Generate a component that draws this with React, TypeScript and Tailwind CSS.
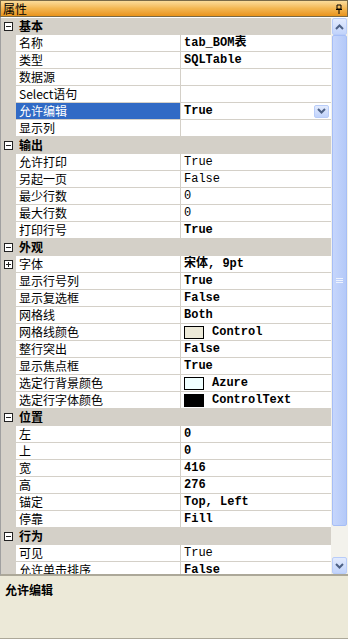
import React from "react";

type Row =
  | { kind: "cat"; label: string }
  | {
      kind: "prop";
      label: string;
      value?: string;
      bold?: boolean;
      swatch?: string;
      selected?: boolean;
      expand?: boolean;
    };

const rows: Row[] = [
  { kind: "cat", label: "基本" },
  { kind: "prop", label: "名称", value: "tab_BOM表", bold: true },
  { kind: "prop", label: "类型", value: "SQLTable", bold: true },
  { kind: "prop", label: "数据源" },
  { kind: "prop", label: "Select语句" },
  { kind: "prop", label: "允许编辑", value: "True", bold: true, selected: true },
  { kind: "prop", label: "显示列" },
  { kind: "cat", label: "输出" },
  { kind: "prop", label: "允许打印", value: "True" },
  { kind: "prop", label: "另起一页", value: "False" },
  { kind: "prop", label: "最少行数", value: "0" },
  { kind: "prop", label: "最大行数", value: "0" },
  { kind: "prop", label: "打印行号", value: "True", bold: true },
  { kind: "cat", label: "外观" },
  { kind: "prop", label: "字体", value: "宋体, 9pt", bold: true, expand: true },
  { kind: "prop", label: "显示行号列", value: "True", bold: true },
  { kind: "prop", label: "显示复选框", value: "False", bold: true },
  { kind: "prop", label: "网格线", value: "Both", bold: true },
  { kind: "prop", label: "网格线颜色", value: "Control", bold: true, swatch: "#ECE9D8" },
  { kind: "prop", label: "整行突出", value: "False", bold: true },
  { kind: "prop", label: "显示焦点框", value: "True", bold: true },
  { kind: "prop", label: "选定行背景颜色", value: "Azure", bold: true, swatch: "#F0FFFF" },
  { kind: "prop", label: "选定行字体颜色", value: "ControlText", bold: true, swatch: "#000000" },
  { kind: "cat", label: "位置" },
  { kind: "prop", label: "左", value: "0", bold: true },
  { kind: "prop", label: "上", value: "0", bold: true },
  { kind: "prop", label: "宽", value: "416", bold: true },
  { kind: "prop", label: "高", value: "276", bold: true },
  { kind: "prop", label: "锚定", value: "Top, Left", bold: true },
  { kind: "prop", label: "停靠", value: "Fill", bold: true },
  { kind: "cat", label: "行为" },
  { kind: "prop", label: "可见", value: "True" },
  { kind: "prop", label: "允许单击排序", value: "False", bold: true },
];

const cjk = "font-['Noto_Sans_CJK_SC',sans-serif]";
const mono = "font-['Liberation_Mono','Noto_Sans_CJK_SC',monospace]";

function Box({ plus }: { plus?: boolean }) {
  return (
    <svg width="9" height="9" viewBox="0 0 9 9" className="block">
      <rect x="0.5" y="0.5" width="8" height="8" fill="#fff" stroke="#222" />
      <line x1="2" y1="4.5" x2="7" y2="4.5" stroke="#222" />
      {plus && <line x1="4.5" y1="2" x2="4.5" y2="7" stroke="#222" />}
    </svg>
  );
}

function Chevron({ up }: { up?: boolean }) {
  return (
    <svg width="9" height="6" viewBox="0 0 9 6">
      <path
        d={up ? "M1 5 L4.5 1.5 L8 5" : "M1 1 L4.5 4.5 L8 1"}
        fill="none"
        stroke="#4D6185"
        strokeWidth="2"
      />
    </svg>
  );
}

function GridRow({ row }: { row: Row }) {
  if (row.kind === "cat") {
    return (
      <div className="flex h-[17px] shrink-0 items-center border-b border-[#D4D0C8] bg-[#D4D0C8]">
        <div className="flex w-[15px] justify-center">
          <Box />
        </div>
        <span className={`pl-[3px] text-[12px] font-bold leading-none text-black ${cjk}`}>
          {row.label}
        </span>
      </div>
    );
  }
  return (
    <div className="flex h-[17px] shrink-0 bg-[#D4D0C8]">
      <div className="flex w-[15px] items-center justify-center">
        {row.expand && <Box plus />}
      </div>
      <div
        className={`flex w-[165px] items-center border-b border-r border-[#D4D0C8] pl-[3px] text-[12px] leading-none ${cjk} ${
          row.selected ? "bg-[#316AC5] text-white" : "bg-white text-black"
        }`}
      >
        {row.label}
      </div>
      <div className="flex flex-1 items-center border-b border-[#D4D0C8] bg-white pl-[3px] pr-[2px]">
        {row.swatch && (
          <span
            className="mr-[8px] h-[13px] w-[20px] shrink-0 border border-black"
            style={{ background: row.swatch }}
          />
        )}
        <span
          className={`flex-1 text-[12px] leading-none text-black ${mono} ${
            row.bold ? "font-bold" : ""
          }`}
        >
          {row.value}
        </span>
        {row.selected && (
          <span className="flex h-[13px] w-[15px] items-center justify-center rounded-[2px] border border-[#B8CCF9] bg-gradient-to-b from-[#E3EBFD] to-[#C1D3FB]">
            <Chevron />
          </span>
        )}
      </div>
    </div>
  );
}

export default function App() {
  return (
    <div className="flex h-[639px] w-[348px] flex-col bg-[#ECE9D8]">
      <div className="flex h-[17px] shrink-0 items-center justify-between border border-[#7A6A48] bg-gradient-to-b from-[#FBDC9A] via-[#F3B650] to-[#E99418] pl-[2px] pr-[4px]">
        <span className={`text-[12px] leading-none text-black ${cjk}`}>属性</span>
        <svg width="8" height="10" viewBox="0 0 8 10">
          <path d="M2 1 H6 V5 H2 Z M1 5.5 H7 M4 6 V10" fill="none" stroke="#000" />
        </svg>
      </div>
      <div className="flex h-[559px] shrink-0 border-b-2 border-l border-[#A0A0A0] border-b-[#ACA899] bg-white pt-[1px]">
        <div className="flex flex-1 flex-col overflow-hidden">
          {rows.map((r, i) => (
            <GridRow key={i} row={r} />
          ))}
        </div>
        <div className="flex w-[17px] shrink-0 flex-col bg-[#F3F2EC] px-[1px]">
          <div className="flex h-[17px] items-center justify-center rounded-[2px] border border-[#B8CCF9] bg-gradient-to-b from-[#E3EBFD] to-[#C1D3FB]">
            <Chevron up />
          </div>
          <div className="flex h-[491px] items-center justify-center rounded-[2px] border border-[#A6BEF6] bg-gradient-to-r from-[#C6D6FC] to-[#B4C9F8]">
            <svg width="7" height="8" viewBox="0 0 7 8">
              <path d="M0 1.5 H7 M0 3.5 H7 M0 5.5 H7" stroke="#EEF3FE" />
            </svg>
          </div>
          <div className="flex-1" />
          <div className="flex h-[17px] items-center justify-center rounded-[2px] border border-[#B8CCF9] bg-gradient-to-b from-[#E3EBFD] to-[#C1D3FB]">
            <Chevron />
          </div>
        </div>
      </div>
      <div className="flex flex-1 flex-col border-b border-[#ACA899] px-[5px] pt-[8px]">
        <span className={`text-[12px] font-bold leading-none text-black ${cjk}`}>允许编辑</span>
      </div>
    </div>
  );
}
